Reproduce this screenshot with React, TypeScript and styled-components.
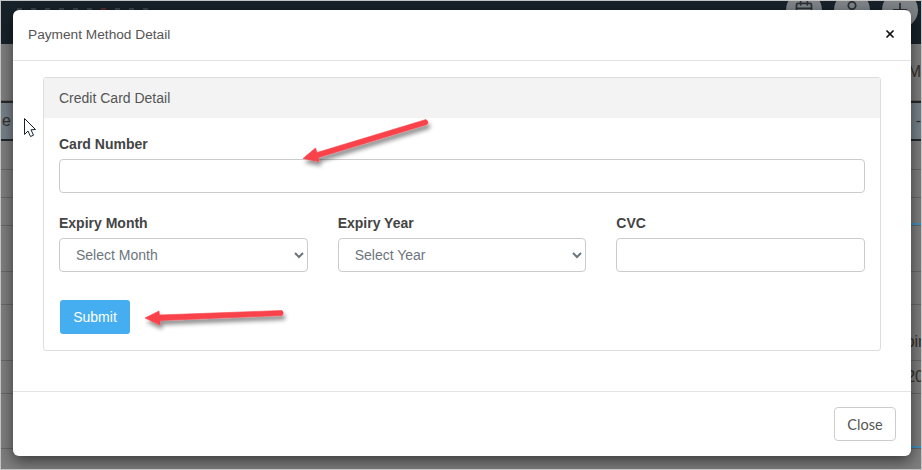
import * as React from "react"
import styled, { createGlobalStyle } from "styled-components"
import { Calendar, Plus, User, X } from "lucide-react"

const GlobalStyle = createGlobalStyle`
html, body {
    margin: 0;
    padding: 0;
    background: #808080;
}
* {
    box-sizing: border-box;
}
`

const Stage = styled("div")`
position: relative;
width: 922px;
height: 470px;
overflow: hidden;
border: 1px solid #c4c4c4;
background: #7e7e7e;
font-family: "Liberation Sans", Arial, sans-serif;
`

const TopBar = styled("div")`
display: flex;
justify-content: space-between;
height: 43px;
background: #18222a;
`

const Glimpses = styled("div")`
display: flex;
gap: 9px;
margin: 7px 0 0 16px;
`

const Glimpse = styled("span")<{ $red?: boolean }>`
width: 5px;
height: 2px;
background: ${p => p.$red ? "#5c2a2e" : "#3a444c"};
`

const RoundButtons = styled("div")`
display: flex;
gap: 12px;
margin: -9px 3px 0 0;
`

const RoundButton = styled("div")`
display: flex;
align-items: center;
justify-content: center;
width: 36px;
height: 36px;
border-radius: 50%;
background: #80858a;
color: #2c3238;
`

const BackRow = styled("div")<{ $height: number; $head?: boolean; $accent?: boolean; $low?: boolean }>`
display: flex;
align-items: ${p => p.$low ? "flex-end" : "center"};
justify-content: space-between;
height: ${p => p.$height}px;
padding-bottom: ${p => p.$low ? "9px" : "0"};
border-bottom: ${p => p.$head ? "2px solid #26292c" : "1px solid #666"};
border-top: ${p => p.$head ? "2px solid #26292c" : "0"};
background: ${p => p.$head
    ? "#77828a"
    : p.$accent
        ? "linear-gradient(#3f8fc0, #3f8fc0) right bottom / 30px 2px no-repeat #7e7e7e"
        : "#7e7e7e"};
color: #33302c;
font-size: 16px;
`

const BackText = styled("span")<{ $overhang?: number }>`
padding-left: 1px;
margin-right: ${p => p.$overhang ? -p.$overhang : 0}px;
`

const Backdrop = styled("div")`
display: flex;
flex-direction: column;
`

const Modal = styled("div")`
position: absolute;
top: 9px;
left: 12px;
display: flex;
flex-direction: column;
width: 898px;
height: 446px;
background: #fff;
border-radius: 6px;
box-shadow: 0 5px 15px rgba(0, 0, 0, 0.55);
color: #555;
`

const ModalHeader = styled("header")`
display: flex;
align-items: center;
justify-content: space-between;
flex: none;
height: 51px;
padding: 0 15px 1px;
border-bottom: 1px solid #e4e4e4;
font-size: 13.7px;
`

const CloseIcon = styled("span")`
display: flex;
margin: -1px 0 0 0;
color: #111;
`

const ModalBody = styled("div")`
flex: 1;
padding: 16px 30px 0;
`

const Card = styled("section")`
height: 274px;
border: 1px solid #ddd;
border-radius: 3px;
`

const CardHeader = styled("div")`
display: flex;
align-items: center;
height: 40px;
padding: 0 15px;
background: #f3f3f3;
font-size: 14px;
`

const CardBody = styled("div")`
padding: 16px 15px;
`

const Label = styled("label")`
display: block;
margin-bottom: 5px;
font-size: 14px;
font-weight: bold;
line-height: 20px;
color: #444;
`

const TextInput = styled("input")`
display: block;
width: 100%;
height: 34px;
border: 1px solid #cbcbcb;
border-radius: 4px;
background: #fff;
`

const Select = styled("select")`
display: block;
width: 100%;
height: 34px;
padding: 0 12px;
border: 1px solid #cbcbcb;
border-radius: 4px;
background: #fff;
font-family: "Liberation Sans", Arial, sans-serif;
font-size: 14px;
color: #6c757d;
`

const FieldGrid = styled("div")`
display: grid;
grid-template-columns: repeat(3, 1fr);
gap: 30px;
margin-top: 20px;
`

const SubmitButton = styled("button")`
display: block;
width: 70px;
height: 34px;
margin: 28px 0 0 1px;
padding: 0;
border: 0;
border-radius: 3px;
background: #45aef0;
color: #fff;
font-family: "Liberation Sans", Arial, sans-serif;
font-size: 14px;
`

const ModalFooter = styled("footer")`
display: flex;
justify-content: flex-end;
flex: none;
height: 65px;
padding: 15px;
border-top: 1px solid #e4e4e4;
`

const CloseButton = styled("button")`
width: 62px;
height: 34px;
padding: 0;
border: 1px solid #ccc;
border-radius: 4px;
background: #fff;
color: #555;
font-family: "Lato", sans-serif;
font-size: 14.5px;
`

const Overlay = styled("svg")`
position: absolute;
top: -1px;
left: -1px;
pointer-events: none;
`

const backRows: { height: number; left?: string; right?: string; overhang?: number; low?: boolean; head?: boolean; accent?: boolean }[] = [
    { height: 57, right: "M" },
    { height: 40, left: "e", right: "-", head: true },
    { height: 29 },
    { height: 28 },
    { height: 28, accent: true },
    { height: 46 },
    { height: 33 },
    { height: 56, right: "oin", overhang: 6, low: true },
    { height: 33, right: "20", overhang: 3 },
    { height: 55, accent: true },
]

const App: React.FunctionComponent = () => {
    return <>
        <GlobalStyle />
        <Stage>
            <Backdrop>
                <TopBar>
                    <Glimpses>
                        <Glimpse />
                        <Glimpse />
                        <Glimpse />
                        <Glimpse />
                        <Glimpse />
                        <Glimpse />
                        <Glimpse $red />
                        <Glimpse />
                        <Glimpse />
                        <Glimpse />
                    </Glimpses>
                    <RoundButtons>
                        <RoundButton><Calendar size={20} /></RoundButton>
                        <RoundButton><User size={22} /></RoundButton>
                        <RoundButton><Plus size={22} /></RoundButton>
                    </RoundButtons>
                </TopBar>
                {backRows.map((row, i) => (
                    <BackRow key={i} $height={row.height} $head={row.head} $accent={row.accent} $low={row.low}>
                        <BackText>{row.left}</BackText>
                        <BackText $overhang={row.overhang}>{row.right}</BackText>
                    </BackRow>
                ))}
            </Backdrop>

            <Modal>
                <ModalHeader>
                    Payment Method Detail
                    <CloseIcon><X size={12} strokeWidth={3.5} /></CloseIcon>
                </ModalHeader>
                <ModalBody>
                    <Card>
                        <CardHeader>Credit Card Detail</CardHeader>
                        <CardBody>
                            <Label>Card Number</Label>
                            <TextInput type="text" />
                            <FieldGrid>
                                <div>
                                    <Label>Expiry Month</Label>
                                    <Select defaultValue="">
                                        <option value="">Select Month</option>
                                    </Select>
                                </div>
                                <div>
                                    <Label>Expiry Year</Label>
                                    <Select defaultValue="">
                                        <option value="">Select Year</option>
                                    </Select>
                                </div>
                                <div>
                                    <Label>CVC</Label>
                                    <TextInput type="text" />
                                </div>
                            </FieldGrid>
                            <SubmitButton type="button">Submit</SubmitButton>
                        </CardBody>
                    </Card>
                </ModalBody>
                <ModalFooter>
                    <CloseButton type="button">Close</CloseButton>
                </ModalFooter>
            </Modal>

            <Overlay width="922" height="470" viewBox="0 0 922 470">
                <defs>
                    <filter id="arrow-shadow" x="-20%" y="-50%" width="140%" height="220%">
                        <feDropShadow dx="2" dy="4" stdDeviation="2.2" floodColor="#000" floodOpacity="0.45" />
                    </filter>
                </defs>
                <g filter="url(#arrow-shadow)" fill="#f9434a" stroke="#f9434a" strokeLinejoin="round">
                    <path d="M303 158.5 L315.5 148 L317 152.5 L426 119.5 Q429.5 122 427 124.5 L318.5 157.5 L319 161.5 Z" strokeWidth="0.6" />
                    <path d="M145 318 L159 311 L159.5 315 L282 310.5 Q284.5 313 282 315.5 L160 320.5 L160 325 Z" strokeWidth="0.6" />
                </g>
                <path
                    d="M24.5 118.5 V134.5 L28 131 L30.5 136.5 L33.5 135.2 L31 129.8 L35.5 129.5 Z"
                    fill="#fff"
                    stroke="#1b2230"
                    strokeWidth="1"
                    strokeLinejoin="round"
                />
            </Overlay>
        </Stage>
    </>
}

export default App
